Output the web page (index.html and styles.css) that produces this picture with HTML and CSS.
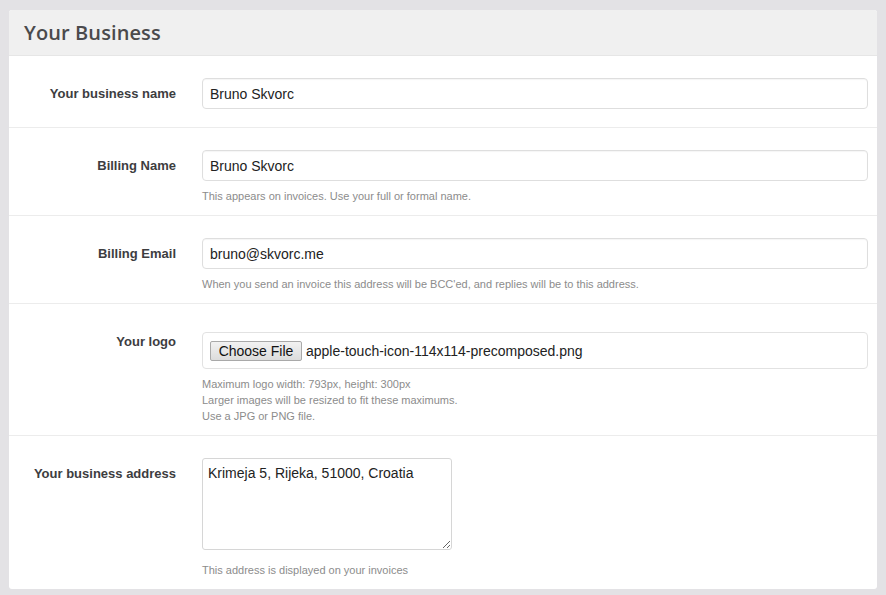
FILE: index.html
```html
<!DOCTYPE html>
<html>
<head>
<meta charset="utf-8">
<link rel="stylesheet" href="styles.css">
</head>
<body>
<div class="panel">
  <div class="panel-head"><h2 class="title">Your Business</h2></div>
  <div class="row">
    <label class="label">Your business name</label>
    <div class="control">
      <input class="field no-help" type="text" value="Bruno Skvorc">
    </div>
  </div>
  <div class="row">
    <label class="label">Billing Name</label>
    <div class="control">
      <input class="field" type="text" value="Bruno Skvorc">
      <p class="help">This appears on invoices. Use your full or formal name.</p>
    </div>
  </div>
  <div class="row">
    <label class="label">Billing Email</label>
    <div class="control">
      <input class="field" type="text" value="bruno@skvorc.me">
      <p class="help">When you send an invoice this address will be BCC'ed, and replies will be to this address.</p>
    </div>
  </div>
  <div class="row">
    <label class="label">Your logo</label>
    <div class="control">
      <div class="filebox"><span class="filebtn">Choose File</span><span class="filename">apple-touch-icon-114x114-precomposed.png</span></div>
      <p class="help help-multi">Maximum logo width: 793px, height: 300px<br>Larger images will be resized to fit these maximums.<br>Use a JPG or PNG file.</p>
    </div>
  </div>
  <div class="row row-last">
    <label class="label">Your business address</label>
    <div class="control">
      <textarea class="area">Krimeja 5, Rijeka, 51000, Croatia</textarea>
      <p class="help help-area">This address is displayed on your invoices</p>
    </div>
  </div>
</div>
</body>
</html>
```
FILE: styles.css
```css
html, body {
  margin: 0;
  padding: 0;
  background: #e3e2e5;
}
body {
  padding: 10px 9px 0 9px;
  font-family: "Liberation Sans", Arial, sans-serif;
}
.panel {
  width: 868px;
  background: #fff;
  border-radius: 3px;
  overflow: hidden;
}
.panel-head {
  height: 45px;
  background: #f0f0f0;
  border-bottom: 1px solid #e6e6e6;
  display: flex;
  align-items: center;
  padding-left: 15px;
}
.title {
  margin: 0;
  font-family: "Open Sans", sans-serif;
  font-weight: 600;
  font-size: 20px;
  color: #4a4a4c;
  letter-spacing: 0.1px;
}
.row {
  display: grid;
  grid-template-columns: 167px 666px;
  column-gap: 26px;
  padding: 22px 0 11px 0;
  border-bottom: 1px solid #ececec;
}
.row-last {
  border-bottom: none;
}
.label {
  text-align: right;
  font-weight: bold;
  font-size: 13px;
  color: #3d3d3f;
  line-height: 18px;
  padding-top: 7px;
}
.control {
  display: flex;
  flex-direction: column;
}
.field {
  box-sizing: border-box;
  height: 31px;
  width: 666px;
  margin: 0;
  border: 1px solid #dedede;
  border-radius: 4px;
  padding: 0 7px;
  font-family: "Liberation Sans", Arial, sans-serif;
  font-size: 14px;
  color: #222;
  background: #fff;
  box-shadow: inset 0 1px 1px rgba(0,0,0,0.04);
}
.no-help {
  margin-bottom: 7px;
}
.help {
  margin: 7px 0 0 0;
  font-size: 11px;
  line-height: 16px;
  color: #8c8c8c;
}
.help-multi {
  margin-top: 7px;
}
.help-area {
  margin-top: 12px;
}
.filebox {
  box-sizing: border-box;
  margin-top: 6px;
  height: 37px;
  border: 1px solid #e2e2e2;
  border-radius: 4px;
  display: flex;
  align-items: center;
  padding-left: 7px;
  font-size: 14px;
  color: #222;
}
.filebtn {
  box-sizing: border-box;
  height: 20px;
  width: 92px;
  display: flex;
  align-items: center;
  justify-content: center;
  border: 1px solid #a9a9a9;
  border-radius: 2px;
  background: linear-gradient(#f2f2f2, #dcdcdc);
  color: #111;
  font-size: 14px;
  margin-right: 4px;
}
.area {
  box-sizing: border-box;
  width: 250px;
  height: 92px;
  margin: 0;
  border: 1px solid #d6d6d6;
  border-radius: 3px;
  padding: 5px 5px;
  font-family: "Liberation Sans", Arial, sans-serif;
  font-size: 14px;
  line-height: 18px;
  color: #222;
  resize: both;
  display: block;
}
```
